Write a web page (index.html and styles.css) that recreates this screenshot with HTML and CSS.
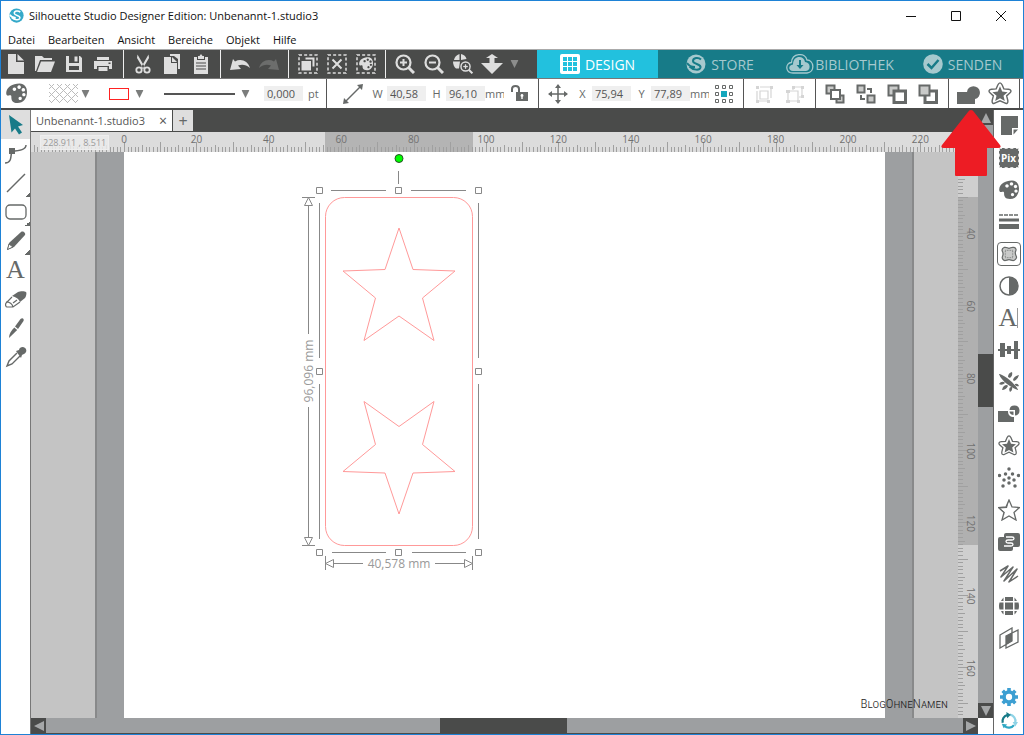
FILE: index.html
```html
<!DOCTYPE html>
<html lang="de">
<head>
    <meta charset="UTF-8">
    <meta name="viewport" content="width=device-width, initial-scale=1.0">
    <title>Silhouette Studio Designer Edition: Unbenannt-1.studio3</title>
    <link rel="stylesheet" href="styles.css">
</head>
<body>
    <!-- shared icons -->
    <svg class="sprite" aria-hidden="true">
        <symbol id="palette" viewBox="0 0 20 20"><path fill-rule="evenodd" d="M13 .5C6 .5.5 4 .2 9.500c0 2 1 2.800 2.300 2.500 1.500-.4 2.600-.4 2.600 1C5 15.500 5.500 19 11 19c5.500 0 9-4.500 9-10.500C20 4 17.500.5 13 .5zM8 4.200a1.700 1.700 0 1 0 .01 0zM12.500 2.200a1.700 1.700 0 1 0 .01 0zM16.500 4.800a1.700 1.700 0 1 0 .01 0zM17 9.500a1.600 1.600 0 1 0 .01 0zM13.500 13a1.600 1.600 0 1 0 .01 0z"/></symbol>
        <symbol id="down" viewBox="0 0 8 8"><path d="M0 0h8L4 8z"/></symbol>
        <symbol id="swirl" viewBox="0 0 20 20"><circle cx="10" cy="10" r="9.500"/><path class="cut" d="M15 5.500C12.500 3 7 3.500 7 7s8.500 2.500 7.500 6.500C13.500 17 7 16 3.500 12.500M1 9c2 3 5 4 8 4" stroke-width="2"/></symbol>
        <symbol id="offset-star" viewBox="0 0 22 22"><path d="M11 4l2 4.800 5 .5-3.800 3.300 1.200 4.900-4.400-2.600-4.400 2.600 1.200-4.900L4 9.300l5-.5z"/><path class="line" stroke-width="1.300" d="M11 .8c1 0 1.500.9 2 2l1.500 3.500 4.200.4c2.400.2 3 1.800 1.500 3.200l-3.100 2.800 1 4c.5 2.600-.8 3.700-2.800 2.500L11 17.200l-4.300 2c-2 1.200-3.300.1-2.800-2.500l1-4-3.100-2.800C.3 8.500.9 6.900 3.300 6.700l4.200-.4L9 2.800c.5-1.100 1-2 2-2z"/></symbol>
        <symbol id="zoom" viewBox="0 0 20 20"><circle class="line" cx="8.500" cy="8.500" r="7" stroke-width="2.200"/><path class="line" stroke-width="3" d="M13.500 13.500l5.500 5.500"/><path class="line" stroke-width="2" d="M5 8.500h7"/></symbol>
        <symbol id="dashed" viewBox="0 0 20 20"><rect class="line" x="1" y="1" width="18" height="18" stroke-width="1.500" stroke-dasharray="3 2.140"/></symbol>
    </svg>

    <div class="app">
        <header class="titlebar">
            <svg class="logo" viewBox="0 0 20 20"><use href="#swirl"/></svg>
            <h1>Silhouette Studio Designer Edition: Unbenannt-1.studio3</h1>
            <div class="window-buttons">
                <button type="button" aria-label="Minimieren"><svg viewBox="0 0 10 10"><path d="M0 5.500h10"/></svg></button>
                <button type="button" aria-label="Maximieren"><svg viewBox="0 0 10 10"><path d="M.5.5h9v9h-9z"/></svg></button>
                <button type="button" aria-label="Schließen"><svg viewBox="0 0 10 10"><path d="M0 0l10 10M10 0L0 10"/></svg></button>
            </div>
        </header>

        <nav class="menu">
            <a href="#">Datei</a>
            <a href="#">Bearbeiten</a>
            <a href="#">Ansicht</a>
            <a href="#">Bereiche</a>
            <a href="#">Objekt</a>
            <a href="#">Hilfe</a>
        </nav>

        <div class="toolbar">
            <div class="group first">
                <button type="button" aria-label="Neu"><svg viewBox="0 0 20 20"><path d="M2 0h8v8h8v12H2z"/><path d="M11.500 0l6.500 6.500h-6.500z"/></svg></button>
                <button type="button" aria-label="Öffnen"><svg viewBox="0 0 20 20"><path d="M0 2h7l2 2h8v2H5L1 17H0z"/><path d="M6 7.500h14L16 18H2z"/></svg></button>
                <button type="button" aria-label="Speichern"><svg viewBox="0 0 20 20"><path fill-rule="evenodd" d="M2 2h14l2 2v14H2zM5 2v7h10V2zM5 12v4h10v-4z"/><path d="M10.500 2.500h3v5h-3z"/></svg></button>
                <button type="button" aria-label="Drucken"><svg viewBox="0 0 20 20"><path d="M4 3h12v3H4z"/><path fill-rule="evenodd" d="M1 7h18v8h-3v-3H4v3H1zM15.500 8.500v1.500h2V8.500z"/><path d="M5.500 13h9v4h-9z"/></svg></button>
            </div>
            <div class="group">
                <button type="button" aria-label="Ausschneiden"><svg viewBox="0 0 20 20"><path d="M4.500.5l7.500 13-1.500 1.500L4 4zM15.500.5l-7.500 13 1.500 1.500L16 4z"/><circle class="line" cx="6" cy="16" r="2.700" stroke-width="1.800"/><circle class="line" cx="14" cy="16" r="2.700" stroke-width="1.800"/></svg></button>
                <button type="button" aria-label="Kopieren"><svg viewBox="0 0 20 20"><path d="M8 0h10v15h-2V5l-4-3H8z"/><path d="M2 3h7v6h6v11H2z"/><path d="M10 3l5 5h-5z"/></svg></button>
                <button type="button" aria-label="Einfügen"><svg viewBox="0 0 20 20"><path fill-rule="evenodd" d="M3 3h3v3h8V3h3v17H3zM5 8.500v1h10v-1zM5 11.500v1h10v-1zM5 14.500v1h10v-1z"/><path d="M7 2h1.500L10 0l1.500 2H13v3H7z"/></svg></button>
            </div>
            <div class="group">
                <button type="button" aria-label="Rückgängig"><svg viewBox="0 0 20 20"><path d="M0 16L3 5l2 2.500C11 4 18 7 20 14 16 10.500 12 10 8 11.500L11 15z"/></svg></button>
                <button type="button" aria-label="Wiederholen" disabled><svg viewBox="0 0 20 20"><path d="M20 16L17 5l-2 2.500C9 4 2 7 0 14c4-3.500 8-4 12-2.500L9 15z"/></svg></button>
            </div>
            <div class="group">
                <button type="button" aria-label="Alles auswählen"><svg viewBox="0 0 20 20"><use href="#dashed"/><path d="M7.500 3.500h9v9h-2v-7h-7z"/><path d="M3.500 7h9.500v9.500H3.500z"/></svg></button>
                <button type="button" aria-label="Auswahl aufheben"><svg viewBox="0 0 20 20"><use href="#dashed"/><path class="line" stroke-width="2" d="M5.500 5.500l9 9M14.500 5.500l-9 9"/></svg></button>
                <button type="button" aria-label="Nach Farbe auswählen"><svg viewBox="0 0 20 20"><use href="#dashed"/><use href="#palette" x="3" y="3" width="14" height="14"/></svg></button>
            </div>
            <div class="group last">
                <button type="button" aria-label="Vergrößern"><svg viewBox="0 0 20 20"><use href="#zoom"/><path class="line" stroke-width="2" d="M8.500 5v7"/></svg></button>
                <button type="button" aria-label="Verkleinern"><svg viewBox="0 0 20 20"><use href="#zoom"/></svg></button>
                <button type="button" aria-label="Auswahl vergrößern"><svg viewBox="0 0 20 20"><path d="M6.500 0v6H1C1.500 3 3.500 1 6.500 0zM8 0c3 .5 5 2.500 5.500 5L8 6zM0 7.500h7l-1 7H3C1 13 0 10 0 7.500z"/><g transform="translate(7 7) scale(.65)"><use href="#zoom" width="20" height="20"/><path class="line" stroke-width="2" d="M8.500 5v7"/></g></svg></button>
                <button type="button" aria-label="Verschieben"><svg class="wide" viewBox="0 0 24 20"><path d="M12 0l6 4h-3.500v5H23L12 20 1 9h8.500V4H6z"/></svg></button>
                <button type="button" class="more" aria-label="Mehr"><svg viewBox="0 0 8 8"><use href="#down"/></svg></button>
            </div>
            <div class="modes">
                <button type="button" class="mode active"><svg viewBox="0 0 20 20"><path fill-rule="evenodd" d="M2 0h16a2 2 0 0 1 2 2v16a2 2 0 0 1-2 2H2a2 2 0 0 1-2-2V2a2 2 0 0 1 2-2zM3 3v4h4V3zM8 3v4h4V3zM13 3v4h4V3zM3 8v4h4V8zM8 8v4h4V8zM13 8v4h4V8zM3 13v4h4v-4zM8 13v4h4v-4zM13 13v4h4v-4z"/></svg>DESIGN</button>
                <button type="button" class="mode store"><svg viewBox="0 0 20 20"><use href="#swirl"/></svg>STORE</button>
                <button type="button" class="mode library"><svg viewBox="0 0 28 20"><path class="line" stroke-width="1.300" d="M7 19C-1 19-1 9 5.500 8.500 6-1 19-2 21 6c7 0 8.500 12 0 13z"/><path fill-rule="evenodd" d="M7 17C2 17 2 11 7 10.500 7 1 18 1 19 8c6 0 6 9 1 9zM13 6v5h-2.500l3.500 4 3.500-4H15V6z"/></svg>BIBLIOTHEK</button>
                <button type="button" class="mode send"><svg viewBox="0 0 20 20"><circle cx="10" cy="10" r="9.800"/><path class="cut" stroke-width="2.500" d="M4.500 10l4 4 7-8"/></svg>SENDEN</button>
            </div>
        </div>

        <div class="options">
            <div class="group style">
                <svg class="palette" viewBox="0 0 20 20"><use href="#palette"/></svg>
                <button type="button" class="fill-btn" aria-label="Füllung">
                    <svg class="hatch" viewBox="0 0 29 20"><path d="M0 5l5-5M0 13L13 0M2 19L21 0M10 19L29 0M18 19l11-11M26 19l3-3M0 16l3 3M0 8l11 11M0 0l19 19M8 0l19 19M16 0l13 13M24 0l5 5"/></svg>
                    <svg class="caret" viewBox="0 0 8 8"><use href="#down"/></svg>
                </button>
                <button type="button" class="stroke-btn" aria-label="Linienfarbe">
                    <span class="swatch"></span>
                    <svg class="caret" viewBox="0 0 8 8"><use href="#down"/></svg>
                </button>
                <button type="button" class="line-btn" aria-label="Linienstil">
                    <span class="rule"></span>
                    <svg class="caret" viewBox="0 0 8 8"><use href="#down"/></svg>
                </button>
                <input type="text" id="thickness" value="0,000"><label for="thickness">pt</label>
            </div>
            <div class="group size">
                <svg viewBox="0 0 20 20"><path class="line" stroke-width="1.500" d="M2 18L18 2"/><path d="M0 20l1-6 5 5zM20 0l-1 6-5-5z"/></svg>
                <label for="w">W</label><input type="text" id="w" value="40,58">
                <label for="h">H</label><input type="text" id="h" value="96,10"><span class="unit">mm</span>
                <button type="button" class="lock" aria-label="Seitenverhältnis"><svg viewBox="0 0 20 20"><path class="line" stroke-width="2" d="M2 8V5c0-4 7-4 7 0v4"/><path fill-rule="evenodd" d="M6 8h12v9H6zM12 10a1.500 1.500 0 0 0-.7 2.800V15h1.400v-2.200A1.500 1.500 0 0 0 12 10z"/></svg></button>
            </div>
            <div class="group position">
                <svg viewBox="0 0 20 20"><path class="line" stroke-width="1.500" d="M10 1v18M1 10h18"/><path d="M10 0l3 4H7zM10 20l3-4H7zM0 10l4-3v6zM20 10l-4-3v6z"/></svg>
                <label for="x">X</label><input type="text" id="x" value="75,94">
                <label for="y">Y</label><input type="text" id="y" value="77,89"><span class="unit">mm</span>
                <button type="button" class="anchor" aria-label="Bezugspunkt"><svg viewBox="0 0 20 20"><path class="line" d="M1.500 1.500h3v3h-3zM8.500 1.500h3v3h-3zM15.500 1.500h3v3h-3zM1.500 8.500h3v3h-3zM15.500 8.500h3v3h-3zM1.500 15.500h3v3h-3zM8.500 15.500h3v3h-3zM15.500 15.500h3v3h-3z"/><path class="teal" d="M7 7h6v6H7z"/></svg></button>
            </div>
            <div class="group grouping">
                <button type="button" aria-label="Gruppieren" disabled><svg viewBox="0 0 20 20"><path class="line" stroke-width="1.200" d="M6 3h11v11M3 7v10h10M6 7h8v8H6z"/><path d="M2 2h3v3H2zM16 2h3v3h-3zM2 16h3v3H2zM13 16h3v3h-3z"/></svg></button>
                <button type="button" aria-label="Gruppierung aufheben" disabled><svg viewBox="0 0 20 20"><path class="line" stroke-width="1.200" d="M3 7h10v10H3zM8 6V3h9v10h-3"/><path d="M1 6h4v3H1zM1 16h4v3H1zM12 16h3v3h-3zM7 2h3v3H7zM16 2h3v3h-3zM16 11h3v3h-3z"/></svg></button>
            </div>
            <div class="group order">
                <button type="button" aria-label="Nach vorne"><svg viewBox="0 0 20 20"><path class="pale" d="M1.500 1.500h8v8h-8zM11.500 11.500h7v7h-7z"/><path class="white" d="M6 6h9v9H6z"/></svg></button>
                <button type="button" aria-label="Nach hinten"><svg viewBox="0 0 20 20"><path class="line" stroke-width="2" d="M11 5h4v4M5 11v4h4"/><path class="pale" d="M1.500 1.500h7v7h-7zM11.500 11.500h7v7h-7z"/></svg></button>
                <button type="button" aria-label="Ganz nach vorne"><svg viewBox="0 0 20 20"><path class="pale" d="M1.500 1.500h10v10h-10z"/><path class="white bold" d="M7 7h11.500v11.500H7z"/></svg></button>
                <button type="button" aria-label="Ganz nach hinten"><svg viewBox="0 0 20 20"><path class="white bold" d="M7 7h11.500v11.500H7z"/><path class="pale" d="M1.500 1.500h10v10h-10z"/></svg></button>
            </div>
            <div class="group modify">
                <button type="button" aria-label="Verschweißen"><svg class="weld" viewBox="0 0 24 20"><path d="M0 8h10a6.500 6.500 0 1 1 8 7v5H0z"/></svg></button>
                <button type="button" aria-label="Offset"><svg class="star" viewBox="0 0 22 22"><use href="#offset-star"/></svg></button>
            </div>
        </div>

        <main class="workspace">
            <aside class="tools">
                <button type="button" class="active" aria-label="Auswählen"><svg viewBox="0 0 22 22"><path d="M4 1l14 10-5 1.500 4 6-3 2-4-6-3.500 4z"/></svg></button>
                <button type="button" aria-label="Punkte bearbeiten"><svg viewBox="0 0 22 22"><path class="line" stroke-width="1.500" d="M0 20c6 0 6-5 6.500-12C15 8 21 7 21 2"/><path d="M4 5h6v6H4z"/></svg></button>
                <button type="button" class="flyout" aria-label="Linie"><svg viewBox="0 0 22 22"><path class="line" stroke-width="1.500" d="M2 20L20 2"/></svg></button>
                <button type="button" class="flyout" aria-label="Rechteck"><svg viewBox="0 0 22 22"><rect class="line" x="1" y="4" width="20" height="14" rx="4" stroke-width="1.300"/></svg></button>
                <button type="button" class="flyout" aria-label="Freihand"><svg viewBox="0 0 22 22"><path d="M2 20l2-7L16 2c2-1.500 5 1 4 3L9 17z"/><path class="white thin" d="M2.500 19.500L4 14l4 3z"/></svg></button>
                <button type="button" class="letter" aria-label="Text">A</button>
                <button type="button" aria-label="Radierer"><svg viewBox="0 0 22 22"><path d="M7 8l6-4c2-1 7-1 8 0s0 5-1 6l-5 4c-1-3-4-5-8-6z"/><path class="line" stroke-width="1.200" d="M7 9l-6 6c-1 2 0 4 1 4h6l7-5M1 14c3 0 6 1 7 5M8 15l4-3"/></svg></button>
                <button type="button" aria-label="Messer"><svg viewBox="0 0 22 22"><path d="M10 9.500l5.500-7.500c2-2 4 0 3 2l-5.500 8z"/><path d="M9.300 10.500l2.900 2.500L4 21c0-4 2-7 5.300-10.500z"/></svg></button>
                <button type="button" aria-label="Pipette"><svg viewBox="0 0 22 22"><path d="M11 5l3-1c1-5 9-3 7 2-1 2-3 2-4 3l-1 3z"/><path class="line" stroke-width="1.400" d="M12 7L4 15l-2 5 5-2 8-8"/></svg></button>
            </aside>

            <section class="document">
                <div class="tabs">
                    <div class="tab"><span>Unbenannt-1.studio3</span><button type="button" aria-label="Tab schließen">×</button></div>
                    <button type="button" class="add" aria-label="Neuer Tab">+</button>
                </div>

                <div class="ruler-x">
                    <svg id="rulerX"></svg>
                    <span class="coords">228.911 , 8.511</span>
                </div>

                <div class="canvas">
                    <div class="mat left"></div>
                    <div class="page"></div>
                    <div class="mat right"></div>
                    <svg class="drawing" viewBox="300 152 190 430">
                        <g class="cutline">
                            <rect x="325.500" y="197.500" width="147" height="348" rx="19"/>
                            <path d="M399 228l14 41.500 42 1.500-32.500 27 11.500 42.500-35-24.500-35 24.500 11.500-42.500-32.500-27 42-1.500z"/>
                            <path d="M399 514l14-41 42-1.500-32.500-27 11.500-43-35 25-35-25 11.500 43-32.500 27 42 1.500z"/>
                        </g>
                        <g class="frame">
                            <path d="M398.500 171v13M331 190.500h55M411 190.500h55M332 552.500h54M412 552.500h54M319.500 203v155M319.500 384v155M478.500 203v155M478.500 384v155"/>
                            <path d="M316.500 187.500h6v6h-6zM395.500 187.500h6v6h-6zM475.500 187.500h6v6h-6zM316.500 368.500h6v6h-6zM475.500 368.500h6v6h-6zM316.500 549.500h6v6h-6zM395.500 549.500h6v6h-6zM475.500 549.500h6v6h-6z"/>
                            <path d="M302 197.500h13M302 545.500h13M308.500 206v128M308.500 407v130M308.500 197.500l4 8h-8zM308.500 545.500l4-8h-8zM325.500 556v14M472.500 556v14M334 563.500h29M435 563.500h29M325.500 563.500l8-4v8zM472.500 563.500l-8-4v8z"/>
                        </g>
                        <circle class="rotate" cx="399" cy="158.500" r="4"/>
                        <text x="399" y="568" text-anchor="middle">40,578 mm</text>
                        <text transform="translate(313 371) rotate(-90)" text-anchor="middle">96,096 mm</text>
                    </svg>
                    <span class="watermark">BlogOhneNamen</span>
                </div>

                <div class="ruler-y"><svg id="rulerY"></svg></div>

                <div class="scroll-y">
                    <button type="button" aria-label="Nach oben"><svg viewBox="0 0 10 10"><path d="M0 10L5 0l5 10z"/></svg></button>
                    <div class="track"><div class="thumb"></div></div>
                    <button type="button" aria-label="Nach unten"><svg viewBox="0 0 10 10"><path d="M0 0h10L5 10z"/></svg></button>
                </div>
                <div class="scroll-x">
                    <button type="button" aria-label="Nach links"><svg viewBox="0 0 10 10"><path d="M10 0v10L0 5z"/></svg></button>
                    <div class="track"><div class="thumb"></div></div>
                    <button type="button" aria-label="Nach rechts"><svg viewBox="0 0 10 10"><path d="M0 0v10l10-5z"/></svg></button>
                </div>
                <div class="corner"></div>
            </section>

            <aside class="panels">
                <button type="button" aria-label="Seite einrichten"><svg viewBox="0 0 22 22"><path d="M3 1h17v12h-6v7H3z"/><path d="M15.500 14.500H20l-4.500 5z"/></svg></button>
                <button type="button" class="pix" aria-label="PixScan"><span>Pix</span></button>
                <button type="button" aria-label="Füllung"><svg viewBox="0 0 22 22"><use href="#palette" x="1" y="1" width="20" height="20"/></svg></button>
                <button type="button" aria-label="Linienstil"><svg viewBox="0 0 22 22"><path class="line" stroke-width="1.500" stroke-dasharray="4 1" d="M1 4h20"/><path d="M1 7.500h20v3H1zM1 13h20v5H1z"/></svg></button>
                <button type="button" class="framed" aria-label="Nachzeichnen"><svg viewBox="0 0 22 22"><path class="pale trace" d="M5 3c3-1 4 1 6 1s3-2 6-1 3 3 2 5 0 4 1 6-2 5-4 5-3-1-5-1-3 1-5 1-4-3-3-5 1-4 0-6 0-4 2-5z"/><path class="line" stroke-dasharray="1 1" d="M6.500 6.500h9v9h-9z"/></svg></button>
                <button type="button" aria-label="Kontrast"><svg viewBox="0 0 22 22"><circle class="line" cx="11" cy="11" r="9" stroke-width="1.500"/><path d="M11 2a9 9 0 0 1 0 18z"/></svg></button>
                <button type="button" class="letter" aria-label="Textstil">A<i></i></button>
                <button type="button" aria-label="Ausrichten"><svg viewBox="0 0 22 22"><path d="M0 10h22v2H0zM2 4h5v14H2zM9 7h4v8H9zM16 2h4v18h-4z"/></svg></button>
                <button type="button" aria-label="Replizieren"><svg viewBox="0 0 22 22"><path d="M1 3c4 0 17 10 19 16C15 18 3 10 1 3z"/><path d="M10 6q0-4 4-5 1 4-2 6zM15 9q1-4 6-5-1 4-5 6zM17 13q3-1 4 2-2 1-4-1zM6 11q-3-1-5 2 3 2 6-1zM9 14q-4 0-5 5 4 0 6-4zM13 16q-3 1-1 5 3-2 2-5z"/></svg></button>
                <button type="button" aria-label="Modifizieren"><svg viewBox="0 0 22 22"><path d="M0 8h10c0 4 2 6 6 6v5H0z"/><path d="M11.500 7A5 5 0 1 1 17 12.500V7z"/><path d="M11.500 8.500h4V12c-2 0-4-1.500-4-3.500z"/></svg></button>
                <button type="button" aria-label="Offset"><svg viewBox="0 0 22 22"><use href="#offset-star"/></svg></button>
                <button type="button" aria-label="Strass"><svg viewBox="0 0 22 22"><path class="dots" d="M11 2h0M7.500 7h0M14.500 7h0M1.500 8.500h0M20.500 8.500h0M6 13h0M11 11h0M16 13h0M11 16h0M5 19h0M17 19h0"/></svg></button>
                <button type="button" aria-label="Skizze"><svg viewBox="0 0 22 22"><path class="line" stroke-width="1.300" d="M11 1l3 7 7.500.5-5.500 5 2 7.500-7-4-7 4 2-7.500L.5 8.500 8 8z"/><path d="M11 1L9 9l-8 .5L7 14l-3 7 3-7.500L.5 8.500 8 8z"/></svg></button>
                <button type="button" aria-label="Puzzle"><svg viewBox="0 0 22 22"><path fill-rule="evenodd" d="M8 2h12q2 0 2 2v10q0 2-2 2h-5v2q0 2-2 2H2q-2 0-2-2V8q0-2 2-2h4V4q0-2 2-2z"/><path class="gap" d="M8 6h6q2 0 2 1.500T14 9h-4q-2 0-2 1.500T10 12h3q2 0 2 1.500T13 15H6"/></svg></button>
                <button type="button" aria-label="Skizzieren"><svg viewBox="0 0 22 22"><path class="line" stroke-width="1.500" stroke-linejoin="round" d="M2 8l8-5L3 14 15 4 6 18 19 6 11 19l9-6"/></svg></button>
                <button type="button" aria-label="Verformen"><svg viewBox="0 0 22 22"><path d="M7 2h8v4H7zM7 7.500h8v7H7zM7 16h8v4H7zM5.500 2.500V6H3q1-2 2.500-3.500zM1.500 7.500h4v7h-4q-1-3.500 0-7zM3 16h2.500v3.500Q4 18 3 16zM16.500 2.500V6H19q-1-2-2.500-3.500zM16.500 7.500h4q1 3.500 0 7h-4zM16.500 16H19q-1 2-2.500 3.500z"/></svg></button>
                <button type="button" aria-label="Ebenen"><svg viewBox="0 0 22 22"><path class="line" stroke-width="1.300" d="M2 8l12-7v13L2 21zM8 9l12-6v12L8 21z"/><path d="M8 9l6-3.500V14l-6 4z"/></svg></button>
                <div class="bottom">
                    <button type="button" class="gear" aria-label="Einstellungen"><svg viewBox="0 0 20 20"><circle class="ring" cx="10" cy="10" r="5.500"/><path class="teeth" d="M10 0v4M10 16v4M0 10h4M16 10h4M3 3l3 3M14 14l3 3M17 3l-3 3M6 14l-3 3"/></svg></button>
                    <button type="button" class="sync" aria-label="Synchronisieren"><svg viewBox="0 0 20 20"><path class="a" d="M3 12A7 7 0 0 1 8 3.500"/><path class="b" d="M11 3a7 7 0 0 1 6 8.500"/><path class="c" d="M15.500 14.500A7 7 0 0 1 5 15.500"/><path class="fa" d="M7 0l5 3-4 4z"/><path class="fb" d="M14 11h6l-3 5z"/><path class="fc" d="M2 13l6 1-4 4z"/></svg></button>
                </div>
            </aside>
        </main>

        <svg class="pointer" viewBox="0 0 60 68"><path d="M30 1q2 0 3 2l26 33q2 3-2 3H46v27q0 1-1 1H15q-1 0-1-1V39H3q-4 0-2-3L27 3q1-2 3-2z"/></svg>
    </div>

    <script>
        const NS = 'http://www.w3.org/2000/svg';
        const SCALE = 3.62; // Pixel pro mm

        function add(parent, tag, attrs, text) {
            const el = document.createElementNS(NS, tag);
            for (const key in attrs) el.setAttribute(key, attrs[key]);
            if (text !== undefined) el.textContent = text;
            parent.appendChild(el);
        }

        function tickLength(mm) {
            if (mm % 10 === 0) return 10;
            return mm % 5 === 0 ? 7 : 5;
        }

        function drawRulerX(svg, origin) {
            let d = '';
            for (let mm = -25; mm <= 229; mm++) {
                const x = Math.round(origin + mm * SCALE) + 0.5;
                d += `M${x} 20v-${tickLength(mm)}`;
            }
            add(svg, 'rect', { x: 294, y: 0, width: 148, height: 20, class: 'range' });
            add(svg, 'path', { d });
            for (let mm = 0; mm <= 220; mm += 20) {
                add(svg, 'text', { x: origin + mm * SCALE, y: 11, 'text-anchor': 'middle' }, mm);
            }
        }

        function drawRulerY(svg, origin) {
            let d = '';
            for (let mm = 18; mm <= 173; mm++) {
                const y = Math.round(origin + mm * SCALE) + 0.5;
                d += `M0 ${y}h${tickLength(mm)}`;
            }
            add(svg, 'rect', { x: 0, y: 45, width: 20, height: 348, class: 'range' });
            add(svg, 'path', { d });
            for (let mm = 40; mm <= 160; mm += 20) {
                add(svg, 'text', { transform: `translate(9 ${origin + 1 + mm * SCALE}) rotate(90)`, 'text-anchor': 'middle' }, mm);
            }
        }

        drawRulerX(document.getElementById('rulerX'), 93);
        drawRulerY(document.getElementById('rulerY'), -64);
    </script>
</body>
</html>
```
FILE: styles.css
```css
* {
    box-sizing: border-box;
}

body {
    margin: 0;
    font-family: "Open Sans", "Noto Sans", sans-serif;
    font-size: 11px;
    color: #111;
}

button {
    display: flex;
    align-items: center;
    justify-content: center;
    padding: 0;
    border: none;
    background: none;
    font: inherit;
    color: inherit;
}

svg {
    display: block;
    flex: none;
    fill: currentColor;
}

.sprite {
    position: absolute;
    width: 0;
    height: 0;
}

.line {
    fill: none;
    stroke: currentColor;
}

.app {
    position: relative;
    display: flex;
    flex-direction: column;
    height: 100vh;
    border: 1px solid #1e82d6;
    background: #fff;
}

/* title and menu */
.titlebar {
    display: flex;
    align-items: center;
    height: 29px;
    padding-left: 8px;
}

.logo {
    width: 15px;
    height: 15px;
    color: #35a9c9;
    --cut: #fff;
}

.cut {
    fill: none;
    stroke: var(--cut);
}

.titlebar h1 {
    margin: 0 0 0 5px;
    font-size: 11px;
    font-weight: 400;
}

.window-buttons {
    display: flex;
    margin-left: auto;
}

.window-buttons button {
    width: 45px;
    height: 28px;
}

.window-buttons svg {
    width: 10px;
    height: 10px;
    fill: none;
    stroke: #111;
}

.menu {
    display: flex;
    align-items: center;
    gap: 13px;
    height: 19px;
    padding-left: 7px;
}

.menu a {
    color: inherit;
    text-decoration: none;
}

/* dark toolbar */
.toolbar {
    display: flex;
    height: 30px;
    border-top: 1px solid #aaa;
    border-bottom: 1px solid #777;
    background: #4a4b4a;
    color: #dedede;
}

.toolbar .group {
    display: flex;
    align-items: center;
    padding: 0 5px 0 4px;
    border-right: 1px solid #eee;
}

.toolbar .first {
    padding: 0 6px 0 0;
}

.toolbar .last {
    border-right: none;
}

.toolbar .group button {
    width: 29px;
    height: 28px;
}

.toolbar svg {
    width: 20px;
    height: 20px;
}

.toolbar svg.wide {
    width: 24px;
}

.toolbar button:disabled {
    color: #6c6d6c;
}

.toolbar .group .more {
    width: 16px;
    color: #8c8d8c;
}

.toolbar .more svg {
    width: 9px;
    height: 8px;
}

.modes {
    display: flex;
    flex: 1;
    margin-left: 10px;
    background: #177b88;
}

.mode {
    gap: 5px;
    width: 121px;
    font-size: 14px;
    color: #a6c9ce;
    --cut: #177b88;
}

.mode.active {
    background: #22c1de;
    color: #fff;
}

.mode.store {
    width: 124px;
}

.mode.library {
    gap: 1px;
    width: 116px;
}

.mode.send {
    flex: 1;
    padding-left: 4px;
}

.toolbar .library svg {
    width: 28px;
}

/* object options */
.options {
    display: flex;
    height: 29px;
    color: #666968;
}

.options .group {
    display: flex;
    align-items: center;
    border-right: 1px solid #555;
}

.options svg {
    width: 20px;
    height: 20px;
}

.options svg.caret {
    width: 9px;
    height: 8px;
    color: #7b7d7c;
}

.options input {
    width: 39px;
    height: 15px;
    padding: 0 0 0 3px;
    border: none;
    background: #efefef;
    font: inherit;
    color: #555;
}

.style {
    width: 326px;
    padding-left: 5px;
}

.options svg.palette {
    width: 21px;
    height: 21px;
}

.fill-btn {
    gap: 3px;
    margin-left: 22px;
}

.options svg.hatch {
    width: 29px;
    fill: none;
    stroke: #bbb;
}

.stroke-btn {
    gap: 6px;
    margin-left: 19px;
}

.swatch {
    width: 20px;
    height: 12px;
    border: 1px solid #f22;
}

.line-btn {
    gap: 6px;
    margin-left: 20px;
}

.rule {
    width: 71px;
    height: 2px;
    background: #555;
}

.style input {
    margin: 0 5px 0 14px;
}

.size {
    width: 212px;
    padding-left: 16px;
}

.position {
    width: 205px;
    padding-left: 9px;
}

.size label, .position label {
    width: 13px;
    margin-left: 4px;
    text-align: center;
}

.size label:first-of-type, .position label:first-of-type {
    margin-left: 8px;
}

.size input, .position input {
    margin-left: 3px;
}

.unit {
    width: 19px;
    overflow: hidden;
}

.lock {
    margin-left: 6px;
}

.anchor {
    margin-left: 5px;
}

.teal {
    fill: #16a7bd;
}

.grouping {
    gap: 11px;
    width: 72px;
    padding-left: 10px;
}

.options button:disabled {
    color: #d5d5d5;
}

.order {
    gap: 11px;
    width: 133px;
    padding-left: 9px;
}

.pale {
    fill: #c9cac9;
    stroke: currentColor;
    stroke-width: 2;
}

.white {
    fill: #fff;
    stroke: currentColor;
    stroke-width: 2;
}

.bold {
    stroke-width: 3;
}

.thin {
    stroke-width: 1;
}

.modify {
    gap: 7px;
    width: 71px;
    padding-left: 8px;
}

.options svg.weld {
    width: 24px;
}

.options svg.star {
    width: 24px;
    height: 24px;
}

/* workspace */
.workspace {
    display: flex;
    flex: 1;
    min-height: 0;
    border-top: 2px solid #4a4b4a;
    color: #666968;
}

.tools {
    width: 29px;
    flex: none;
}

.tools button {
    width: 29px;
    height: 29px;
}

.tools svg, .panels svg {
    width: 22px;
    height: 22px;
}

.tools .active {
    background: #dedede;
    color: #177b88;
}

.tools .flyout {
    background: linear-gradient(135deg, transparent 50%, #666968 50%) right bottom / 5px 5px no-repeat;
}

.tools .letter, .panels .letter {
    font-family: "Liberation Serif", serif;
    font-size: 26px;
    line-height: 30px;
}

.document {
    display: grid;
    flex: 1;
    min-width: 0;
    grid-template-columns: 1fr 20px 15px;
    grid-template-rows: 22px 20px 1fr 16px;
    border-right: 1px solid #666;
    border-left: 1px solid #777;
}

.tabs {
    grid-column: 1 / 3;
    display: flex;
    background: #4a4b4a;
}

.tab {
    display: flex;
    align-items: center;
    justify-content: space-between;
    width: 141px;
    height: 21px;
    padding: 0 5px;
    background: #fff;
    color: #555;
}

.tab button {
    font-size: 14px;
    line-height: 14px;
}

.tabs .add {
    width: 20px;
    height: 21px;
    margin-left: 1px;
    background: #dedede;
    font-size: 16px;
}

.ruler-x {
    position: relative;
    grid-column: 1 / 3;
    background: #dcdcdc;
}

.ruler-x svg {
    width: 100%;
    height: 20px;
}

.ruler-x path, .ruler-y path {
    stroke: #a0a0a0;
}

.ruler-x text, .ruler-y text {
    font-size: 10px;
    fill: #707070;
}

.ruler-x .range {
    fill: #b4b4b4;
}

.coords {
    position: absolute;
    top: 3px;
    left: 9px;
    padding: 0 2px;
    border: 1px solid #eee;
    background: rgba(235, 235, 235, 0.85);
    font-size: 9px;
    line-height: 13px;
    color: #999;
}

.canvas {
    position: relative;
    grid-row: 3;
    display: flex;
    overflow: hidden;
    background: #c4c4c4;
}

.mat {
    width: 29px;
    background: #9d9fa1;
}

.mat.left {
    margin-left: 64px;
    border-left: 2px solid #88898a;
}

.mat.right {
    margin-right: 44px;
    border-right: 2px solid #88898a;
}

.page {
    flex: 1;
    background: #fff;
}

.drawing {
    position: absolute;
    top: 0;
    left: 269px;
    width: 190px;
    height: 430px;
}

.cutline {
    fill: none;
    stroke: #f99;
}

.frame {
    fill: none;
    stroke: #888;
}

.rotate {
    fill: #0f0;
    stroke: #285028;
}

.drawing text {
    font-size: 12px;
    fill: #999;
}

.watermark {
    position: absolute;
    right: 10px;
    bottom: 5px;
    font-family: "Roboto Condensed", "Roboto", sans-serif;
    font-size: 13px;
    font-weight: 300;
    font-variant: small-caps;
    line-height: 18px;
    color: #222;
}

.ruler-y {
    grid-row: 3;
    overflow: hidden;
    background: #cfcfcf;
}

.ruler-y svg {
    width: 20px;
    height: 100%;
}

.ruler-y .range {
    fill: #b0b0b0;
}

.scroll-y {
    grid-row: 1 / 4;
    grid-column: 3;
    display: flex;
    flex-direction: column;
}

.scroll-x {
    grid-row: 4;
    grid-column: 1 / 3;
    display: flex;
    border-bottom: 1px solid #4a4b4a;
}

.scroll-x button, .scroll-y button {
    width: 15px;
    height: 15px;
    background: #4a4b4a;
    color: #a5a7a8;
}

.scroll-x svg, .scroll-y svg {
    width: 10px;
    height: 10px;
}

.track {
    flex: 1;
    background: #9d9fa1;
}

.thumb {
    background: #4a4b4a;
}

.scroll-y .thumb {
    height: 53px;
    margin-top: 229px;
}

.scroll-x .thumb {
    width: 127px;
    height: 15px;
    margin-left: 394px;
}

.corner {
    grid-row: 4;
    grid-column: 3;
    background: #fff;
}

/* right panel */
.panels {
    display: flex;
    flex: none;
    flex-direction: column;
    align-items: center;
    width: 29px;
}

.panels button {
    width: 24px;
    height: 32px;
    flex: none;
}

.panels .framed {
    height: 24px;
    margin: 4px 0;
    border: 1px solid #666968;
    border-radius: 4px;
}

.panels .framed svg {
    width: 18px;
    height: 18px;
}

.trace {
    stroke-width: 1.5;
}

.pix span {
    width: 20px;
    border: 1px dashed #ddd;
    background: #666968;
    font-size: 10px;
    font-weight: 700;
    line-height: 18px;
    color: #fff;
}

.panels .letter i {
    width: 1px;
    height: 20px;
    background: #999;
}

.dots {
    fill: none;
    stroke: currentColor;
    stroke-width: 3.5;
    stroke-linecap: round;
}

.gap {
    fill: none;
    stroke: #fff;
    stroke-width: 1.3;
}

.bottom {
    margin: auto 0 1px;
}

.panels .bottom button {
    height: 24px;
}

.panels .bottom svg {
    width: 18px;
    height: 18px;
    fill: none;
}

.gear {
    color: #3c9fd2;
}

.ring, .teeth {
    stroke: currentColor;
    stroke-width: 4;
}

.sync .a, .sync .b, .sync .c {
    stroke-width: 2.5;
}

.sync .a { stroke: #177b88; }
.sync .b { stroke: #8fd3e6; }
.sync .c { stroke: #2fa8c4; }
.sync .fa { fill: #177b88; }
.sync .fb { fill: #8fd3e6; }
.sync .fc { fill: #2fa8c4; }

/* red hint arrow */
.pointer {
    position: absolute;
    top: 108px;
    right: 22px;
    width: 60px;
    height: 68px;
    fill: #ed1c24;
}
```
